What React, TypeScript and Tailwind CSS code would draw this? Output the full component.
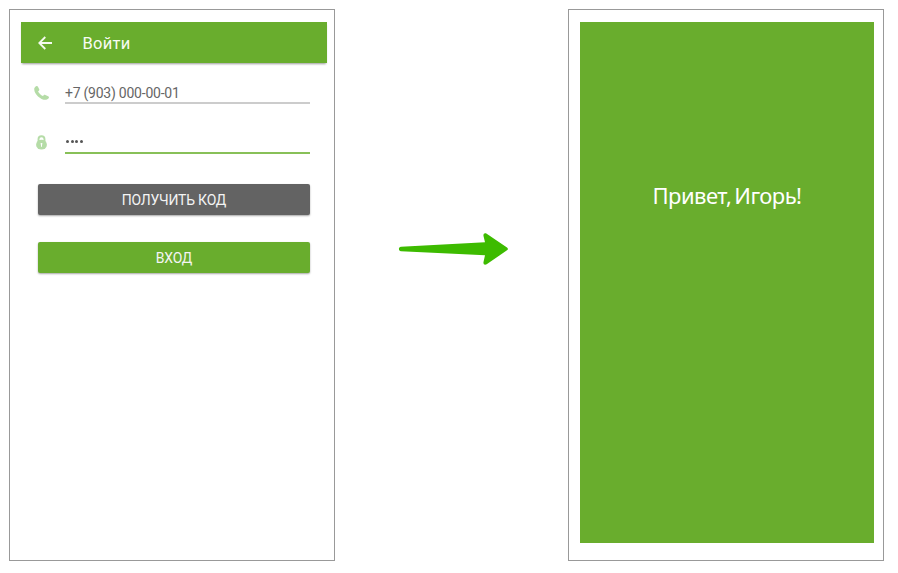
function BackArrow() {
  return (
    <svg className="h-[14px] w-[15px]" viewBox="0 0 15 14" fill="none" stroke="#f4faef" strokeWidth="1.8">
      <path d="M14 7H1.500M7.300 1L1.300 7l6 6" />
    </svg>
  );
}

function PhoneIcon() {
  return (
    <svg className="mt-[7.500px] h-[14px] w-[15px]" viewBox="0 0 14 14" preserveAspectRatio="none" fill="#b5dca7">
      <path d="M.3 2.200C.7 1.200 1.700.3 2.500.1c.6-.1 1 .2 1.300.9l1 2.100c.3.700.2 1.100-.3 1.600l-.7.8c.8 1.800 2.500 3.500 4.500 4.500l.8-.8c.5-.4.900-.5 1.500-.200l2.600 1.300c.7.300.900.800.700 1.400-.4 1-1.500 1.900-2.700 2.100C6.500 14.400-.6 7.700.3 2.200z" />
    </svg>
  );
}

function LockIcon() {
  return (
    <svg className="mt-[8.500px] ml-[2px] h-[15px] w-[11px]" viewBox="0 0 11 15">
      <path d="M2.500 7V4.200a3 3 0 0 1 6 0V7" fill="none" stroke="#b5dca7" strokeWidth="1.900" />
      <ellipse cx="5.500" cy="9.700" rx="5.400" ry="4.900" fill="#b5dca7" />
      <path d="M5.500 7.900a.9.900 0 0 1 .5 1.700v2.200H5V9.600a.9.900 0 0 1 .5-1.700z" fill="#fff" />
    </svg>
  );
}

function LoginScreen() {
  return (
    <section className="h-[552px] w-[326px] border border-[#999999] pt-[12px] pr-[7px] pl-[11px]">
      <header className="flex h-[41px] items-center bg-[#69ad2d] pl-[17px] text-[#f7fbf3] shadow-[0_2px_2px_-1px_rgba(0,0,0,0.4)]">
        <BackArrow />
        <h1 className="mt-[2px] ml-[29.500px] text-[16.500px] leading-[20px] tracking-[0.3px]">Войти</h1>
      </header>
      <div className="pr-[17px] pl-[13px]">
        <div className="mt-[15px] flex h-[26px]">
          <div className="w-[31px]"><PhoneIcon /></div>
          <div className="flex-1 border-b-2 border-[#cccccc] pt-[7px] text-[14px] leading-[16px] tracking-[-0.24px] text-[#666666]">
            +7 (903) 000-00-01
          </div>
        </div>
        <div className="mt-[22px] flex h-[28px]">
          <div className="w-[31px]"><LockIcon /></div>
          <div className="flex flex-1 items-start gap-[1.500px] border-b-2 border-[#88c058] pt-[14px] pl-[1px]">
            <i className="h-[3px] w-[3px] rounded-full bg-[#555555]" />
            <i className="h-[3px] w-[3px] rounded-full bg-[#555555]" />
            <i className="h-[3px] w-[3px] rounded-full bg-[#555555]" />
            <i className="h-[3px] w-[3px] rounded-full bg-[#555555]" />
          </div>
        </div>
        <div className="mt-[30px] flex flex-col gap-[27px] pl-[4px] text-[14px] leading-[16px] tracking-[-0.22px] text-[#f4f4f4]">
          <button className="h-[31px] rounded-[2px] bg-[#636363] pt-[1px] shadow-[0_1px_2px_rgba(0,0,0,0.35)]">ПОЛУЧИТЬ КОД</button>
          <button className="h-[31px] rounded-[2px] bg-[#69ad2d] pt-[1px] shadow-[0_1px_2px_rgba(0,0,0,0.35)]">ВХОД</button>
        </div>
      </div>
    </section>
  );
}

function WelcomeScreen() {
  return (
    <section className="h-[552px] w-[316px] border border-[#999999] pt-[12px] pl-[11px]">
      <div className="flex h-[521px] w-[294px] justify-center bg-[#69ad2d] pt-[158px]">
        <p className="h-[30px] font-['Noto_Sans',sans-serif] text-[22px] leading-[30px] tracking-[-0.55px] [word-spacing:-2.200px] whitespace-nowrap text-white">Привет, Игорь!</p>
      </div>
    </section>
  );
}

export default function App() {
  return (
    <main className="flex h-[573px] w-[898px] overflow-hidden bg-white pt-[9px] pl-[9px] font-['Roboto',sans-serif]">
      <LoginScreen />
      <div className="w-[233px] pt-[223px] pl-[62.500px]">
        <svg className="h-[34px] w-[111px]" viewBox="0 0 111 34">
          <path
            d="M3 14.700L87 10.300 85.500 4c-.4-2.300 1.200-3.600 3.200-2.300L109 15.500c1.200.9 1.200 2 0 2.800L88.700 32.200c-2 1.200-3.600.1-3.200-2.200L87 23.300 3 19.200c-2.800-.1-2.800-4.400 0-4.500z"
            fill="#3dbb00"
          />
        </svg>
      </div>
      <WelcomeScreen />
    </main>
  );
}
